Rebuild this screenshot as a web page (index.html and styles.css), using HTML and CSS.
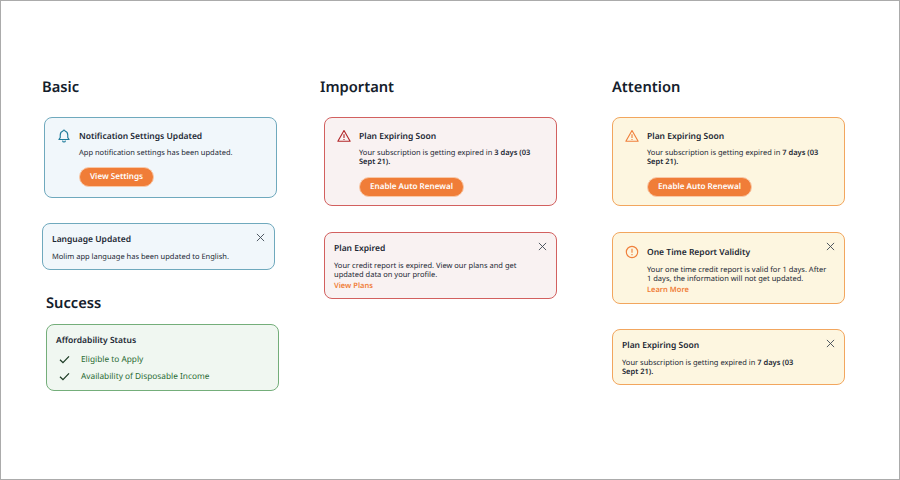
FILE: index.html
```html
<!DOCTYPE html>
<html lang="en">
<head>
    <meta http-equiv="Content-Type" content="text/html; charset=UTF-8">
    <title>Alert Styles</title>
    <link rel="stylesheet" href="styles.css">
</head>
<body>
    <div class="board">
        <!-- Basic + Success -->
        <div class="column">
            <h2>Basic</h2>
            <div class="alert info has-icon shift-2 card-basic-1">
                <svg class="alert-icon" viewBox="0 0 16 16"><path d="M8 1.200c-.7 0-1.100.5-1.100 1.100C4.900 2.900 3.700 4.700 3.700 6.800v3L2.200 12h11.600l-1.500-2.200v-3c0-2.100-1.200-3.900-3.200-4.500 0-.6-.4-1.100-1.100-1.100zM6.300 13.200c.2 1 .9 1.600 1.700 1.600s1.500-.6 1.700-1.600"/></svg>
                <h3>Notification Settings Updated</h3>
                <p>App notification settings has been updated.</p>
                <a class="btn" href="#">View Settings</a>
            </div>
            <div class="alert info card-basic-2">
                <svg class="close" viewBox="0 0 10 10"><path d="M1 1l8 8M9 1l-8 8"/></svg>
                <h3>Language Updated</h3>
                <p>Molim app language has been updated to English.</p>
            </div>
            <h2 class="success-title">Success</h2>
            <div class="alert success shift-4 card-success">
                <h3>Affordability Status</h3>
                <ul>
                    <li><svg viewBox="0 0 12 10"><path d="M1 5.200l3.300 3.300L11 1.500"/></svg>Eligible to Apply</li>
                    <li><svg viewBox="0 0 12 10"><path d="M1 5.200l3.300 3.300L11 1.500"/></svg>Availability of Disposable Income</li>
                </ul>
            </div>
        </div>

        <!-- Important -->
        <div class="column">
            <h2>Important</h2>
            <div class="alert danger has-icon shift-4 card-tall">
                <svg class="alert-icon" viewBox="0 0 16 16"><path d="M8 1.800L1 14h14zM8 6v4.200M8 11.500v1.200"/></svg>
                <h3>Plan Expiring Soon</h3>
                <p>Your subscription is getting expired in <b>3 days (03</b> <b>Sept 21).</b></p>
                <a class="btn" href="#">Enable Auto Renewal</a>
            </div>
            <div class="alert danger shift-4 card-expired">
                <svg class="close" viewBox="0 0 10 10"><path d="M1 1l8 8M9 1l-8 8"/></svg>
                <h3>Plan Expired</h3>
                <p>Your credit report is expired. View our plans and get updated data on your profile.</p>
                <a class="link" href="#">View Plans</a>
            </div>
        </div>

        <!-- Attention -->
        <div class="column">
            <h2>Attention</h2>
            <div class="alert warning has-icon card-tall">
                <svg class="alert-icon" viewBox="0 0 16 16"><path d="M8 1.800L1 14h14zM8 6v4.200M8 11.500v1.200"/></svg>
                <h3>Plan Expiring Soon</h3>
                <p>Your subscription is getting expired in <b>7 days (03</b> <b>Sept 21).</b></p>
                <a class="btn" href="#">Enable Auto Renewal</a>
            </div>
            <div class="alert warning has-icon card-validity">
                <svg class="alert-icon" viewBox="0 0 16 16"><circle cx="8" cy="8" r="6.500"/><path d="M8 4.300v4.600M8 10.400v1.300"/></svg>
                <svg class="close" viewBox="0 0 10 10"><path d="M1 1l8 8M9 1l-8 8"/></svg>
                <h3>One Time Report Validity</h3>
                <p>Your one time credit report is valid for 1 days. After 1 days, the information will not get updated.</p>
                <a class="link" href="#">Learn More</a>
            </div>
            <div class="alert warning card-short">
                <svg class="close" viewBox="0 0 10 10"><path d="M1 1l8 8M9 1l-8 8"/></svg>
                <h3>Plan Expiring Soon</h3>
                <p class="narrow">Your subscription is getting expired in <b>7 days (03</b> <b>Sept 21).</b></p>
            </div>
        </div>
    </div>
</body>
</html>
```

FILE: styles.css
```css
/* General Reset */
* {
    margin: 0;
    padding: 0;
    box-sizing: border-box;
}

html, body {
    height: 100%;
    width: 100%;
}

body {
    background-color: #FFFFFF;
    border: 1px solid #ABABAB;
    font-family: "Noto Sans", sans-serif;
    text-rendering: geometricPrecision;
    color: #1B2733;
    overflow: hidden;
}

.board {
    display: grid;
    grid-template-columns: 278px 292px 233px;
    padding: 75px 0 0 41px;
}

h2 {
    font-size: 14.700px;
    font-weight: 600;
    line-height: 22px;
    color: #14202B;
    margin-bottom: 19px;
}

.success-title {
    margin: 22px 0 10px 4px;
}

/* Alert cards */
.alert {
    position: relative;
    width: 233px;
    border: 1px solid;
    border-radius: 8px;
    padding: 9px 9px;
    margin-bottom: 26px;
}

.alert h3 {
    font-size: 8.500px;
    font-weight: 600;
    line-height: 13px;
    margin-bottom: 7px;
}

.alert p {
    font-size: 7.500px;
    line-height: 9px;
    color: #1B2733;
}

.alert b {
    font-weight: 600;
}

.has-icon {
    padding: 12px 16px 9px 34px;
}

.has-icon h3 {
    margin-bottom: 6px;
}

.shift-2 {
    margin-left: 2px;
}

.shift-4 {
    margin-left: 4px;
}

.info {
    background-color: #F1F7FB;
    border-color: #6FA9BD;
}

.danger {
    background-color: #F9F2F2;
    border-color: #D2605F;
}

.warning {
    background-color: #FDF6E0;
    border-color: #F2A65E;
}

.success {
    background-color: #F0F7F1;
    border-color: #74AE7A;
    margin-bottom: 0;
}

.card-basic-1 { height: 81px; margin-bottom: 25px; }
.card-basic-2 { height: 47px; margin-bottom: 0; }
.card-success { height: 67px; }
.card-tall { height: 89px; }
.card-expired { height: 67px; }
.card-validity { height: 72px; margin-bottom: 25px; padding-top: 13px; }
.card-short { height: 56px; }

.card-validity h3 {
    margin-bottom: 7px;
}

.card-tall .btn {
    margin-top: 10px;
}

/* Icons */
.alert-icon {
    position: absolute;
    left: 12px;
    top: 11px;
    width: 14px;
    height: 14px;
    fill: none;
    stroke-width: 1.300;
    stroke-linejoin: round;
}

.card-validity .alert-icon {
    top: 12px;
}

.info .alert-icon { stroke: #1F7C9B; }
.danger .alert-icon { stroke: #B3282B; }
.warning .alert-icon { stroke: #F0803C; }

.close {
    position: absolute;
    right: 9px;
    top: 9px;
    width: 9px;
    height: 9px;
    fill: none;
    stroke: #3D4752;
    stroke-width: 1;
}

/* Actions */
.btn {
    display: inline-block;
    height: 20px;
    margin-top: 9px;
    padding: 0 10px;
    border: 1px solid #F9C9A8;
    border-radius: 10px;
    background-color: #F07D38;
    color: #FFFFFF;
    font-size: 8.100px;
    font-weight: 600;
    line-height: 18px;
    text-decoration: none;
}

.link {
    display: block;
    margin-top: 1px;
    color: #F07D38;
    font-size: 7.500px;
    font-weight: 600;
    line-height: 10px;
    text-decoration: none;
}

.narrow {
    width: 178px;
}

/* Success list */
.success ul {
    list-style: none;
    padding-left: 3px;
}

.success h3 {
    margin-bottom: 4px;
}

.success li {
    display: flex;
    align-items: center;
    gap: 11px;
    height: 17px;
    font-size: 8.300px;
    color: #2B6B34;
}

.success li svg {
    width: 11px;
    height: 9px;
    fill: none;
    stroke: #1C3B24;
    stroke-width: 1.400;
}
```
